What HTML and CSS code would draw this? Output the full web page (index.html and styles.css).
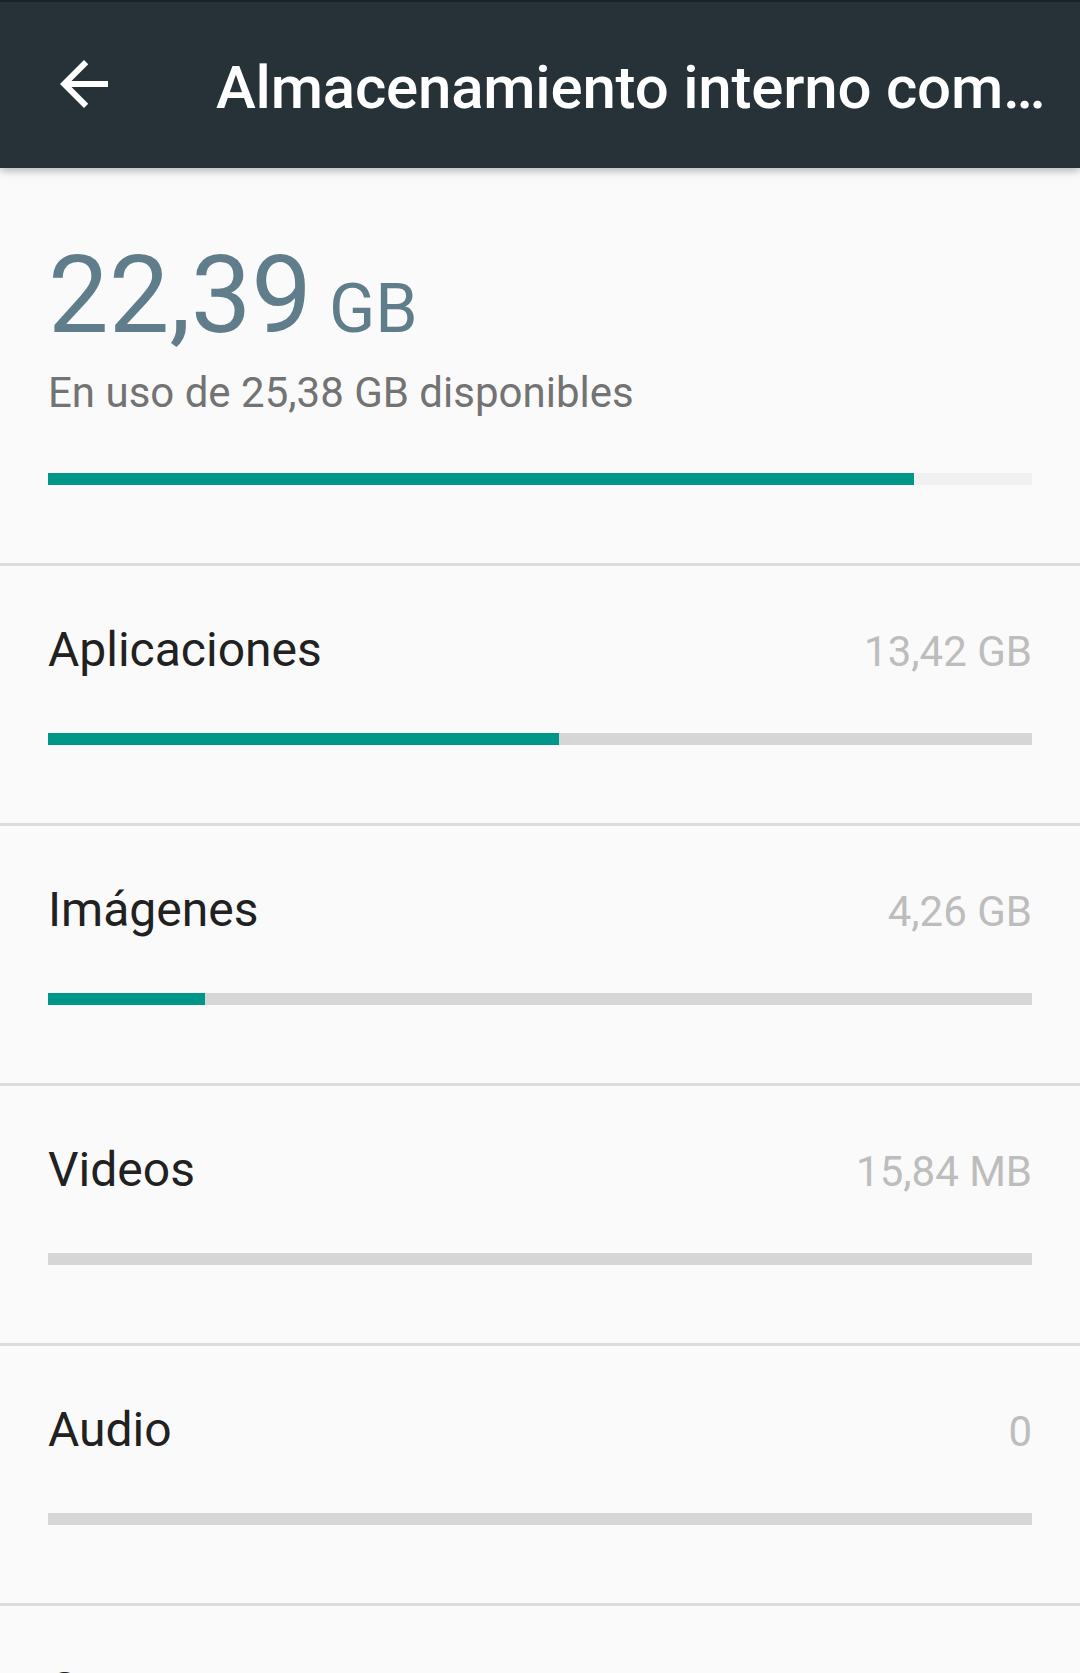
FILE: index.html
```html
<!DOCTYPE html>
<html lang="es">
<head>
<meta charset="utf-8">
<title>Almacenamiento interno compartido</title>
<link rel="stylesheet" href="styles.css">
</head>
<body>
<header class="toolbar">
  <svg class="back" viewBox="0 0 24 24" width="72" height="72" aria-hidden="true">
    <path fill="#ffffff" d="M20 11H7.83l5.59-5.59L12 4l-8 8 8 8 1.41-1.41L7.83 13H20v-2z"/>
  </svg>
  <h1 class="title">Almacenamiento interno com…</h1>
</header>

<section class="summary">
  <div class="used"><span class="used-num">22,39</span><span class="used-unit"> GB</span></div>
  <div class="used-sub">En uso de 25,38 GB disponibles</div>
  <div class="bar bar-total"><div class="fill" style="width:88%"></div></div>
</section>

<ul class="list">
  <li class="item">
    <div class="item-head"><span class="item-title">Aplicaciones</span><span class="item-size">13,42 GB</span></div>
    <div class="bar"><div class="fill" style="width:51.9%"></div></div>
  </li>
  <li class="item">
    <div class="item-head"><span class="item-title">Imágenes</span><span class="item-size">4,26 GB</span></div>
    <div class="bar"><div class="fill" style="width:16%"></div></div>
  </li>
  <li class="item">
    <div class="item-head"><span class="item-title">Videos</span><span class="item-size">15,84 MB</span></div>
    <div class="bar"><div class="fill" style="width:0%"></div></div>
  </li>
  <li class="item">
    <div class="item-head"><span class="item-title">Audio</span><span class="item-size">0</span></div>
    <div class="bar"><div class="fill" style="width:0%"></div></div>
  </li>
  <li class="item">
    <div class="item-head"><span class="item-title">Otros</span><span class="item-size">4,12 GB</span></div>
    <div class="bar"><div class="fill" style="width:16%"></div></div>
  </li>
</ul>
</body>
</html>
```

FILE: styles.css
```css
* { box-sizing: border-box; }

html, body {
  margin: 0;
  padding: 0;
  background: #fafafa;
  font-family: Roboto, "Noto Sans", "Liberation Sans", sans-serif;
}

.toolbar {
  position: relative;
  z-index: 1;
  height: 168px;
  background: #263238;
  border-top: 2px solid #1b2124;
  display: flex;
  align-items: center;
  box-shadow: 0 3px 8px rgba(0, 0, 0, 0.28);
}

.back {
  display: block;
  flex: none;
  margin-left: 48px;
  margin-top: -2px;
}

.title {
  margin: 0 0 0 96px;
  padding-top: 6px;
  font-size: 60px;
  line-height: 70px;
  font-weight: 500;
  letter-spacing: -0.2px;
  color: #ffffff;
  white-space: nowrap;
  overflow: hidden;
}

.summary {
  padding: 63px 48px 78px;
}

.used {
  font-size: 108px;
  line-height: 128px;
  color: #607d8b;
  white-space: nowrap;
}

.used-unit {
  font-size: 68px;
  line-height: 1;
}

.used-sub {
  margin-top: 9px;
  font-size: 42px;
  line-height: 50px;
  color: #737373;
}

.bar {
  height: 12px;
  background: #d6d6d6;
}

.bar-total {
  margin-top: 55px;
  background: #f1f1f1;
}

.fill {
  height: 100%;
  background: #009688;
}

.list {
  list-style: none;
  margin: 0;
  padding: 0;
}

.item {
  border-top: 3px solid #dcdcdc;
  padding: 56px 48px 78px;
}

.item-head {
  display: flex;
  justify-content: space-between;
  align-items: baseline;
  margin-bottom: 55px;
}

.item-title {
  font-size: 48px;
  line-height: 56px;
  color: #212121;
}

.item-size {
  font-size: 42px;
  line-height: 50px;
  color: #bdbdbd;
}
```
